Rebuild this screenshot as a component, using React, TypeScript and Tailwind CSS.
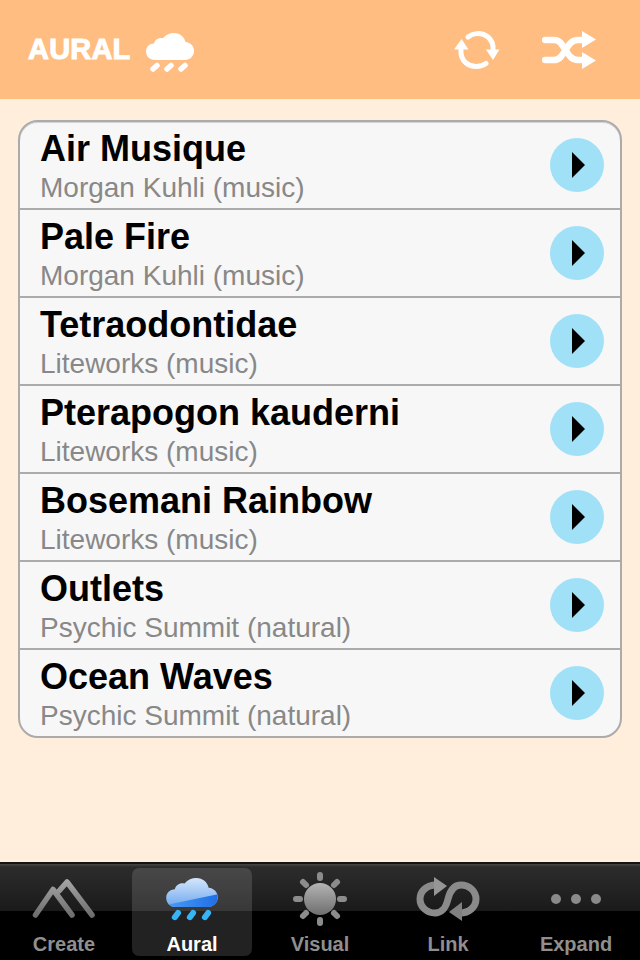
import React from 'react';

const tracks = [
  { title: 'Air Musique', sub: 'Morgan Kuhli (music)' },
  { title: 'Pale Fire', sub: 'Morgan Kuhli (music)' },
  { title: 'Tetraodontidae', sub: 'Liteworks (music)' },
  { title: 'Pterapogon kauderni', sub: 'Liteworks (music)' },
  { title: 'Bosemani Rainbow', sub: 'Liteworks (music)' },
  { title: 'Outlets', sub: 'Psychic Summit (natural)' },
  { title: 'Ocean Waves', sub: 'Psychic Summit (natural)' },
];

const CLOUD =
  'M9 27C3.5 27 0 23 0 18.5C0 14 3.5 10.5 8 10.5C9 6.5 13 4 17 5.2C20 1.5 24 0 28 0C34 0 38.5 4 39.5 9C44.5 9.5 48 13 48 18C48 23 44 27 39 27Z';

const HeaderCloud = () => (
  <svg width="48" height="39" viewBox="0 0 48 39">
    <path d={CLOUD} fill="#fff" />
    <g stroke="#fff" strokeWidth="5.5" strokeLinecap="round">
      <line x1="7" y1="36" x2="11" y2="32.500" />
      <line x1="21" y1="36" x2="25" y2="32.500" />
      <line x1="35" y1="36" x2="39" y2="32.500" />
    </g>
  </svg>
);

const RepeatIcon = () => (
  <svg width="46" height="40" viewBox="0 0 46 40">
    <g fill="none" stroke="#fff" strokeWidth="5" strokeLinecap="round">
      <path d="M14 7C18 3.500 27 1.500 34 7C38 10.500 39.500 15 39 20" />
      <path d="M32 33.500C27 37 18 38 12 33C8 29.500 6.500 25 7 20" />
    </g>
    <path d="M0 19.500L7.500 9L14.500 19.500Z" fill="#fff" />
    <path d="M32 19.500H45.500L39 30Z" fill="#fff" />
  </svg>
);

const ShuffleIcon = () => (
  <svg width="54" height="38" viewBox="0 0 54 38">
    <g fill="none" stroke="#fff" strokeWidth="6.500" strokeLinecap="round" strokeLinejoin="round">
      <path d="M3 9H12C17 9 19 12 23 18C27 25 30 29 36 29H41" />
      <path d="M3 29H12C17 29 19 26 23 20C27 13 30 9 36 9H41" />
    </g>
    <path d="M40 0L54 8.500L40 17Z" fill="#fff" />
    <path d="M40 21L54 29.500L40 38Z" fill="#fff" />
  </svg>
);

const CreateIcon = () => (
  <svg width="64" height="40" viewBox="0 0 64 40">
    <defs>
      <linearGradient id="createGrad" gradientUnits="userSpaceOnUse" x1="0" y1="2" x2="0" y2="38">
        <stop offset="0" stopColor="#a4a4a4" />
        <stop offset="1" stopColor="#6c6c6c" />
      </linearGradient>
    </defs>
    <path
      d="M3.500 36L21 10.500L40 36M27 12L35 3L60 36"
      fill="none"
      stroke="url(#createGrad)"
      strokeWidth="5.500"
      strokeLinecap="round"
      strokeLinejoin="round"
    />
  </svg>
);

const ActiveCloud = () => (
  <svg width="52" height="43" viewBox="0 0 48 40">
    <defs>
      <linearGradient id="cloudTop" x1="0" y1="0" x2="0" y2="1">
        <stop offset="0" stopColor="#d6e6fb" />
        <stop offset="1" stopColor="#6ea8ee" />
      </linearGradient>
      <linearGradient id="cloudBottom" x1="0" y1="0" x2="1" y2="0">
        <stop offset="0" stopColor="#4a9cf2" />
        <stop offset="1" stopColor="#1f6fe8" />
      </linearGradient>
      <clipPath id="cloudClip">
        <path d={CLOUD} />
      </clipPath>
    </defs>
    <path d={CLOUD} fill="url(#cloudTop)" />
    <path d="M0 25L48 15V28H0Z" fill="url(#cloudBottom)" clipPath="url(#cloudClip)" />
    <g stroke="#35b4f6" strokeWidth="5.500" strokeLinecap="round">
      <line x1="8" y1="36.500" x2="11" y2="32.500" />
      <line x1="22" y1="36.500" x2="25" y2="32.500" />
      <line x1="36" y1="36.500" x2="39" y2="32.500" />
    </g>
  </svg>
);

const VisualIcon = () => (
  <svg width="56" height="56" viewBox="0 0 56 56">
    <defs>
      <linearGradient id="sunGrad" x1="0" y1="0" x2="0" y2="1">
        <stop offset="0" stopColor="#b4b4b4" />
        <stop offset="1" stopColor="#6e6e6e" />
      </linearGradient>
    </defs>
    <circle cx="28" cy="28" r="16" fill="url(#sunGrad)" />
    <g stroke="#8c8c8c" strokeWidth="6" strokeLinecap="round">
      <line x1="28" y1="4" x2="28" y2="7" />
      <line x1="28" y1="49" x2="28" y2="52" />
      <line x1="4" y1="28" x2="8" y2="28" />
      <line x1="48" y1="28" x2="52" y2="28" />
      <line x1="11" y1="11" x2="14" y2="14" />
      <line x1="42" y1="42" x2="45" y2="45" />
      <line x1="11" y1="45" x2="14" y2="42" />
      <line x1="42" y1="14" x2="45" y2="11" />
    </g>
  </svg>
);

const LinkIcon = () => (
  <svg width="64" height="44" viewBox="0 0 64 44">
    <path
      d="M20 8C11 8 4 14 4 22C4 30 11 36 19 36C27 36 30 30 32 22C34 14 38 8 45 8C53 8 60 14 60 22C60 30 53 36 44 36"
      fill="none"
      stroke="#8a8a8a"
      strokeWidth="7"
    />
    <path d="M18 0L31 9L18 19Z" fill="#969696" />
    <path d="M46 25L33 35L46 44Z" fill="#808080" />
  </svg>
);

const ExpandIcon = () => (
  <div className="flex gap-[10px]">
    <div className="size-[10px] rounded-full bg-[#8a8a8a]" />
    <div className="size-[10px] rounded-full bg-[#8a8a8a]" />
    <div className="size-[10px] rounded-full bg-[#8a8a8a]" />
  </div>
);

const tabs = [
  { label: 'Create', icon: <CreateIcon /> },
  { label: 'Aural', icon: <ActiveCloud />, active: true },
  { label: 'Visual', icon: <VisualIcon /> },
  { label: 'Link', icon: <LinkIcon /> },
  { label: 'Expand', icon: <ExpandIcon /> },
];

export default function App() {
  return (
    <div className="flex h-[960px] w-[640px] flex-col overflow-hidden bg-[#ffeedb] font-['Liberation_Sans',Arial,sans-serif]">
      {/* Top bar */}
      <div className="flex h-[99px] shrink-0 items-center bg-[#ffbd82] pr-[44px] pl-[28px]">
        <span className="text-[29px] leading-none font-bold tracking-[0.2px] text-white [-webkit-text-stroke:1px_#ffffff]">
          AURAL
        </span>
        <div className="mt-[6px] ml-[15px]">
          <HeaderCloud />
        </div>
        <div className="ml-auto flex items-center gap-[42px]">
          <RepeatIcon />
          <ShuffleIcon />
        </div>
      </div>

      {/* Track list */}
      <div className="mx-[18px] mt-[21px] overflow-hidden rounded-[20px] border-2 border-[#ababab] bg-[#f7f7f7] shadow-[inset_0_1px_0_#d4d4d4]">
        {tracks.map((track, i) => (
          <div
            key={track.title}
            className={`flex items-center pr-[16px] pl-[20px] ${i < tracks.length - 1 ? 'h-[88px] border-b-2 border-[#ababab]' : 'h-[86px]'}`}
          >
            <div className="min-w-0 flex-1 pt-[3px]">
              <div className="text-[36px] leading-[40px] font-bold text-black">{track.title}</div>
              <div className="mt-[3px] text-[28px] leading-[32px] text-[#888888]">{track.sub}</div>
            </div>
            <div className="flex size-[54px] items-center justify-center rounded-full bg-[#a0e1f7] pl-[2px]">
              <div className="h-0 w-0 border-y-[13px] border-l-[13px] border-y-transparent border-l-black" />
            </div>
          </div>
        ))}
      </div>

      {/* Tab bar */}
      <div className="mt-auto grid h-[98px] shrink-0 grid-cols-5 border-t-2 border-[#141414] bg-[linear-gradient(#464646_0px,#2c2c2c_3px,#1a1a1a_47px,#000000_47px)]">
        {tabs.map((tab) => (
          <div key={tab.label} className="flex justify-center pt-[4px]">
            <div
              className={`flex h-[88px] w-[120px] flex-col items-center rounded-[7px] ${tab.active ? 'bg-[#ffffff22]' : ''}`}
            >
              <div className="flex h-[58px] items-center justify-center pt-[4px]">{tab.icon}</div>
              <span
                className={`mt-[6px] text-[20px] leading-[24px] font-bold ${tab.active ? 'text-white' : 'text-[#8f8f8f]'}`}
              >
                {tab.label}
              </span>
            </div>
          </div>
        ))}
      </div>
    </div>
  );
}
